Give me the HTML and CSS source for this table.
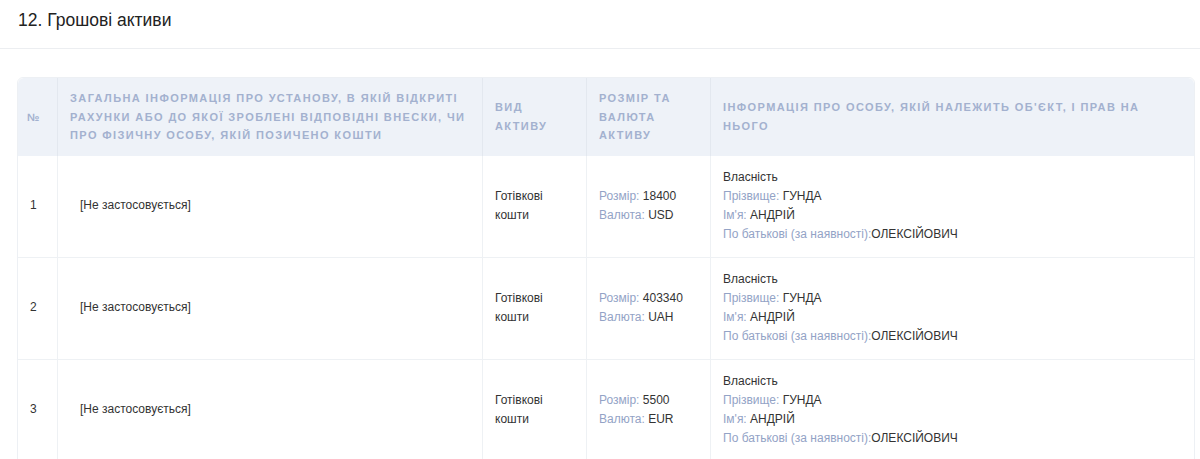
FILE: index.html
```html
<!DOCTYPE html>
<html lang="uk">
<head>
    <meta charset="UTF-8">
    <title>Грошові активи</title>
    <link rel="stylesheet" href="styles.css">
</head>
<body>

    <div class="section-head">
        <h2>12. Грошові активи</h2>
    </div>

    <div class="table-wrap">
        <table class="assets">
            <thead>
                <tr>
                    <th class="col-num">№</th>
                    <th class="col-info">Загальна інформація про установу, в якій відкриті рахунки або до якої зроблені відповідні внески, чи про фізичну особу, якій позичено кошти</th>
                    <th class="col-type">Вид активу</th>
                    <th class="col-size">Розмір та валюта активу</th>
                    <th class="col-owner">Інформація про особу, якій належить об'єкт, і прав на нього</th>
                </tr>
            </thead>
            <tbody>
                <tr>
                    <td>1</td>
                    <td><span class="na">[Не застосовується]</span></td>
                    <td>Готівкові<br>кошти</td>
                    <td><span class="lbl">Розмір:</span> 18400<br><span class="lbl">Валюта:</span> USD</td>
                    <td>Власність<br><span class="lbl">Прізвище:</span> ГУНДА<br><span class="lbl">Ім'я:</span> АНДРІЙ<br><span class="lbl">По батькові (за наявності):</span>ОЛЕКСІЙОВИЧ</td>
                </tr>
                <tr>
                    <td>2</td>
                    <td><span class="na">[Не застосовується]</span></td>
                    <td>Готівкові<br>кошти</td>
                    <td><span class="lbl">Розмір:</span> 403340<br><span class="lbl">Валюта:</span> UAH</td>
                    <td>Власність<br><span class="lbl">Прізвище:</span> ГУНДА<br><span class="lbl">Ім'я:</span> АНДРІЙ<br><span class="lbl">По батькові (за наявності):</span>ОЛЕКСІЙОВИЧ</td>
                </tr>
                <tr>
                    <td>3</td>
                    <td><span class="na">[Не застосовується]</span></td>
                    <td>Готівкові<br>кошти</td>
                    <td><span class="lbl">Розмір:</span> 5500<br><span class="lbl">Валюта:</span> EUR</td>
                    <td>Власність<br><span class="lbl">Прізвище:</span> ГУНДА<br><span class="lbl">Ім'я:</span> АНДРІЙ<br><span class="lbl">По батькові (за наявності):</span>ОЛЕКСІЙОВИЧ</td>
                </tr>
            </tbody>
        </table>
    </div>

</body>
</html>
```

FILE: styles.css
```css
body { margin: 0; font-family: "Liberation Sans", Arial, sans-serif; color: #333; background: #fff; }
.section-head { border-bottom: 1px solid #eceef1; padding: 10px 18px 0; height: 49px; box-sizing: border-box; }
.section-head h2 { margin: 0; font-size: 17.5px; font-weight: normal; color: #222; line-height: 20px; }
.table-wrap { padding: 28px 5px 0 17px; }
.assets { width: 100%; border-collapse: separate; border-spacing: 0; border: 1px solid #edf0f4; border-radius: 6px 6px 0 0; font-size: 12px; }
.assets th { background: #eef2f8; color: #a3b1cf; font-size: 11px; font-weight: bold; text-transform: uppercase; letter-spacing: 1.4px; text-align: left; line-height: 18.5px; padding: 11px 12px 11px; border-left: 1px solid #e3e8ef; vertical-align: middle; }
.assets th:first-child { border-left: none; border-top-left-radius: 6px; padding-left: 9px; }
.assets th:last-child { border-top-right-radius: 6px; }
.assets td { line-height: 19px; padding: 12px 12px 13px; border-left: 1px solid #eef1f4; border-top: 1px solid #eef1f4; vertical-align: middle; height: 75px; }
.assets td:first-child { border-left: none; }
.assets tbody tr:first-child td { border-top: none; }
.col-num { width: 18px; }
.col-info { width: 400px; }
.col-type { width: 79px; }
.col-size { width: 99px; }
.na { padding-left: 10px; }
.lbl { color: #93a3c6; }
```
